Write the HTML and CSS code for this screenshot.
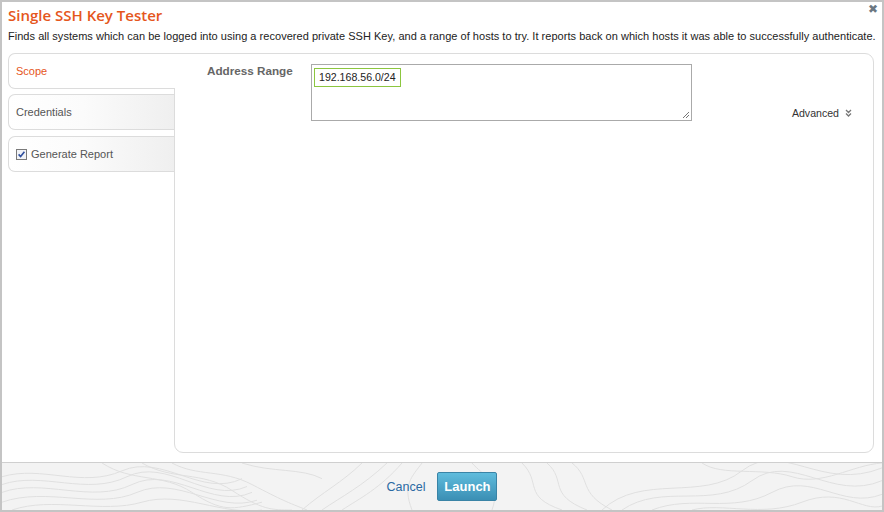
FILE: index.html
```html
<!DOCTYPE html>
<html>
<head>
<meta charset="utf-8">
<link rel="stylesheet" href="styles.css">
</head>
<body>
<div class="dialog">
  <div class="header">
    <h1 class="title">Single SSH Key Tester</h1>
    <span class="close">&#x2716;</span>
  </div>
  <p class="desc">Finds all systems which can be logged into using a recovered private SSH Key, and a range of hosts to try. It reports back on which hosts it was able to successfully authenticate.</p>
  <div class="body">
    <div class="tabs">
      <div class="tab active">Scope</div>
      <div class="tab">Credentials</div>
      <div class="tab tab-last">
        <svg class="check" width="11" height="11" viewBox="0 0 11 11">
          <rect x="0.5" y="0.5" width="10" height="10" fill="#f1f3f7" stroke="#7a7a7a"/>
          <path d="M2.6 5.4 L4.6 7.6 L8.4 2.8" fill="none" stroke="#2f4f9e" stroke-width="1.6"/>
        </svg>
        Generate Report
      </div>
    </div>
    <div class="panel">
      <div class="field">
        <label class="label">Address Range</label>
        <div class="textarea">
          <span class="token">192.168.56.0/24</span>
          <svg class="grip" width="8" height="8" viewBox="0 0 8 8">
            <path d="M7 1 L1 7 M7 4 L4 7" stroke="#777" stroke-width="1"/>
          </svg>
        </div>
        <div class="advanced">Advanced
          <svg width="7" height="8" viewBox="0 0 7 8">
            <path d="M1 1 L3.5 3.5 L6 1 M1 4.5 L3.5 7 L6 4.5" fill="none" stroke="#777" stroke-width="1.3"/>
          </svg>
        </div>
      </div>
    </div>
  </div>
  <div class="footer">
    <svg class="topo" width="880" height="48" viewBox="0 0 880 48" preserveAspectRatio="none">
      <g fill="none" stroke="#e0e0e0" stroke-width="1">
        <path d="M0 14 C40 2 80 26 120 8 S200 36 240 16"/>
        <path d="M0 22 C40 8 85 34 125 14 S205 42 245 24"/>
        <path d="M0 30 C40 15 90 42 130 22 S210 48 250 30"/>
        <path d="M0 40 C45 24 95 48 135 30 S215 52 255 38"/>
        <path d="M10 48 C50 34 100 52 140 40 S220 54 260 48"/>
        <path d="M100 0 C130 20 160 10 190 30 S230 48 260 40"/>
        <path d="M140 0 C170 18 200 8 230 28 S270 48 290 48"/>
        <path d="M170 0 C195 14 220 6 250 22 S285 40 305 48"/>
        <path d="M300 48 C320 30 340 20 360 0"/>
        <path d="M320 48 C340 34 360 24 385 0"/>
        <path d="M340 48 C358 36 378 26 400 0"/>
        <path d="M520 0 C540 20 520 34 560 48"/>
        <path d="M545 0 C565 18 545 32 585 48"/>
        <path d="M570 0 C590 16 575 30 610 48"/>
        <path d="M600 48 C640 10 700 40 740 8 S820 30 880 5"/>
        <path d="M620 48 C660 20 710 48 750 18 S830 40 880 18"/>
        <path d="M650 48 C690 32 730 52 770 30 S840 48 880 32"/>
        <path d="M690 48 C720 40 760 56 800 40 S860 50 880 44"/>
        <path d="M700 0 C720 14 760 4 790 14 S850 2 880 0"/>
        <path d="M420 0 C410 14 400 22 410 48"/>
        <path d="M470 0 C480 12 500 20 490 48"/>
        <path d="M240 0 C270 10 300 5 320 16"/>
      </g>
    </svg>
    <a class="cancel" href="#">Cancel</a>
    <button class="launch" type="button">Launch</button>
  </div>
</div>
</body>
</html>
```
FILE: styles.css
```css
* { box-sizing: border-box; }
html, body { margin: 0; padding: 0; }
body {
  width: 884px;
  height: 512px;
  font-family: "Liberation Sans", Arial, sans-serif;
  background: #fff;
}
.dialog {
  width: 884px;
  height: 512px;
  border: 2px solid #c4c4c4;
  background: #fff;
  display: flex;
  flex-direction: column;
}
.header {
  display: flex;
  justify-content: space-between;
  align-items: flex-start;
  padding: 0 4px 0 6px;
  height: 25px;
}
.title {
  margin: 0;
  padding-top: 3px;
  font-family: "Open Sans", "Noto Sans", sans-serif;
  font-weight: 600;
  font-size: 15px;
  line-height: 20px;
  color: #e5561c;
}
.close {
  font-size: 12px;
  line-height: 12px;
  color: #6b7781;
  padding-top: 1px;
}
.desc {
  margin: 0;
  padding: 0 0 0 6px;
  font-size: 11px;
  letter-spacing: 0.03px;
  line-height: 18px;
  height: 26px;
  color: #222;
  white-space: nowrap;
}
.body {
  display: flex;
  height: 400px;
  padding: 0 8px 0 6px;
}
.tabs {
  width: 166px;
  flex: none;
  display: flex;
  flex-direction: column;
  gap: 5px;
}
.tab {
  height: 36px;
  border: 1px solid #dcdcdc;
  border-right: none;
  border-radius: 7px 0 0 7px;
  background: linear-gradient(to right, #ffffff 0%, #fbfbfb 45%, #efefef 100%);
  font-size: 11px;
  color: #555;
  padding-left: 7px;
  display: flex;
  align-items: center;
  gap: 4px;
}
.tab-last { margin-top: 1px; }
.tab.active {
  background: #fff;
  color: #e5561c;
  width: 167px;
  position: relative;
  z-index: 1;
}
.check { flex: none; }
.panel {
  flex: 1;
  border: 1px solid #dcdcdc;
  border-radius: 0 9px 9px 9px;
  background: #fff;
  padding: 10px 21px 0 32px;
}
.field {
  display: flex;
  align-items: flex-start;
}
.label {
  width: 104px;
  flex: none;
  font-weight: bold;
  font-size: 11.7px;
  color: #666;
  padding-top: 0;
}
.textarea {
  position: relative;
  width: 381px;
  height: 57px;
  border: 1px solid #aaa;
  padding: 2px;
  flex: none;
}
.token {
  display: inline-block;
  height: 19px;
  width: 87px;
  border: 1px solid #8cc63f;
  font-size: 10.6px;
  line-height: 17px;
  padding-left: 4px;
  color: #222;
  white-space: nowrap;
}
.grip {
  position: absolute;
  right: 1px;
  bottom: 1px;
}
.advanced {
  margin-left: auto;
  margin-top: 43px;
  font-size: 10.6px;
  color: #333;
  display: flex;
  align-items: center;
  gap: 6px;
}
.footer {
  position: relative;
  margin-top: 9px;
  flex: 1;
  border-top: 1px solid #cfcfcf;
  background: #f3f3f3;
  display: flex;
  align-items: center;
  justify-content: center;
  gap: 12px;
  overflow: hidden;
}
.topo {
  position: absolute;
  left: 0;
  top: 0;
  width: 100%;
  height: 100%;
}
.cancel {
  position: relative;
  font-size: 12.5px;
  color: #2a6aa3;
  text-decoration: none;
}
.launch {
  position: relative;
  width: 60px;
  height: 29px;
  margin-top: -1px;
  border: 1px solid #3a84a6;
  border-radius: 2px;
  background: linear-gradient(to bottom, #5fbcdd, #3b8fb4);
  color: #fff;
  font-family: "Liberation Sans", Arial, sans-serif;
  font-weight: bold;
  font-size: 13px;
  padding: 0;
}
```
